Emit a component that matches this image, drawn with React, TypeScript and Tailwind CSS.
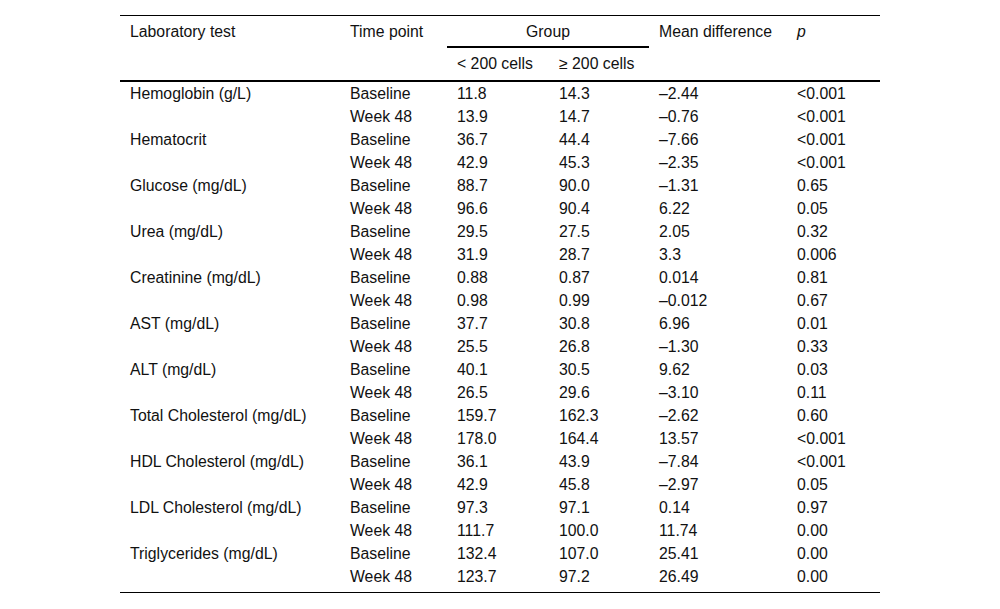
const rows: [string, string, string, string, string][] = [
  ['Hemoglobin (g/L)', '11.8', '14.3', '–2.44', '<0.001'],
  ['', '13.9', '14.7', '–0.76', '<0.001'],
  ['Hematocrit', '36.7', '44.4', '–7.66', '<0.001'],
  ['', '42.9', '45.3', '–2.35', '<0.001'],
  ['Glucose (mg/dL)', '88.7', '90.0', '–1.31', '0.65'],
  ['', '96.6', '90.4', '6.22', '0.05'],
  ['Urea (mg/dL)', '29.5', '27.5', '2.05', '0.32'],
  ['', '31.9', '28.7', '3.3', '0.006'],
  ['Creatinine (mg/dL)', '0.88', '0.87', '0.014', '0.81'],
  ['', '0.98', '0.99', '–0.012', '0.67'],
  ['AST (mg/dL)', '37.7', '30.8', '6.96', '0.01'],
  ['', '25.5', '26.8', '–1.30', '0.33'],
  ['ALT (mg/dL)', '40.1', '30.5', '9.62', '0.03'],
  ['', '26.5', '29.6', '–3.10', '0.11'],
  ['Total Cholesterol (mg/dL)', '159.7', '162.3', '–2.62', '0.60'],
  ['', '178.0', '164.4', '13.57', '<0.001'],
  ['HDL Cholesterol (mg/dL)', '36.1', '43.9', '–7.84', '<0.001'],
  ['', '42.9', '45.8', '–2.97', '0.05'],
  ['LDL Cholesterol (mg/dL)', '97.3', '97.1', '0.14', '0.97'],
  ['', '111.7', '100.0', '11.74', '0.00'],
  ['Triglycerides (mg/dL)', '132.4', '107.0', '25.41', '0.00'],
  ['', '123.7', '97.2', '26.49', '0.00'],
];

const cols = 'grid grid-cols-[220px_107px_102px_100px_138px_93px]';

export default function App() {
  return (
    <div className="w-[1000px] h-[609px] bg-white pt-[15px] font-['Liberation_Sans',Arial,sans-serif] text-[15.8px] text-[#111]">
      <div className="mx-[120px] w-[760px]">
        {/* Header */}
        <div className={`${cols} grid-rows-[32px_32px] border-t border-b-2 border-black`}>
          <div className="row-span-2 pl-[10px] leading-[31px]">Laboratory test</div>
          <div className="row-span-2 pl-[10px] leading-[31px]">Time point</div>
          <div className="col-span-2 border-b-2 border-black text-center leading-[31px]">Group</div>
          <div className="row-span-2 pl-[10px] leading-[31px]">Mean difference</div>
          <div className="row-span-2 pl-[10px] leading-[31px] italic">p</div>
          <div className="pl-[10px] leading-[32px]">&lt; 200 cells</div>
          <div className="pl-[10px] leading-[32px]">≥ 200 cells</div>
        </div>
        {/* Body */}
        <div className="border-b border-black pb-[4px]">
          {rows.map((r, i) => (
            <div key={i} className={`${cols} h-[23px] leading-[23px]`}>
              <div className="pl-[10px] whitespace-nowrap">{r[0]}</div>
              <div className="pl-[10px]">{i % 2 === 0 ? 'Baseline' : 'Week 48'}</div>
              <div className="pl-[10px]">{r[1]}</div>
              <div className="pl-[10px]">{r[2]}</div>
              <div className="pl-[10px]">{r[3]}</div>
              <div className="pl-[10px]">{r[4]}</div>
            </div>
          ))}
        </div>
      </div>
    </div>
  );
}
